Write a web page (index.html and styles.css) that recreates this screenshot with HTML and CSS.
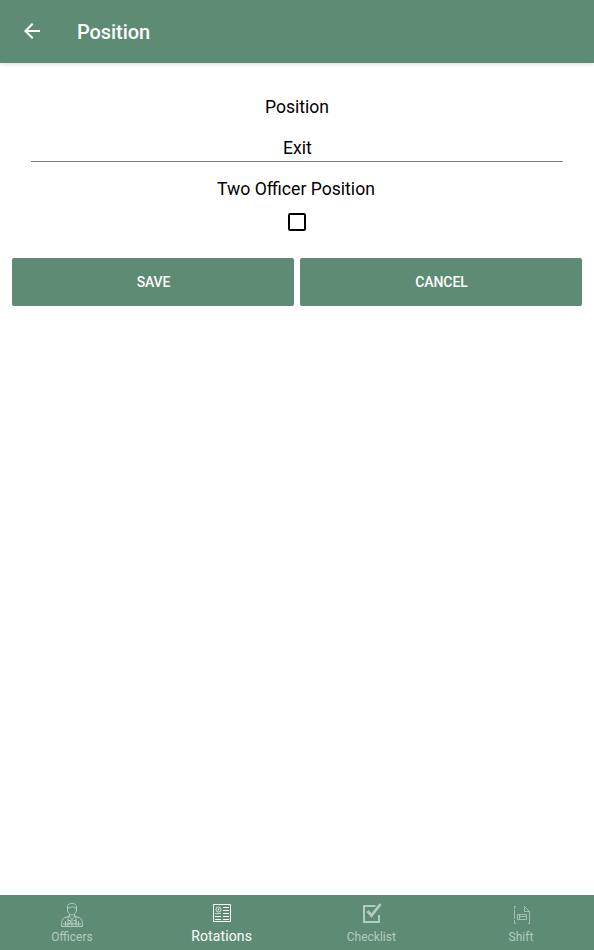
FILE: index.html
```html
<!DOCTYPE html>
<html lang="en">
<head>
<meta charset="utf-8">
<title>Position</title>
<link rel="stylesheet" href="styles.css">
</head>
<body>
<header class="bar">
  <svg class="back" viewBox="0 0 24 24"><path d="M20 11H7.830l5.590-5.590L12 4l-8 8 8 8 1.410-1.410L7.830 13H20z"/></svg>
  <h1>Position</h1>
</header>
<main>
  <div class="label">Position</div>
  <div class="field">Exit</div>
  <div class="label two">Two Officer Position</div>
  <div class="check"></div>
  <div class="actions"><button>SAVE</button><button>CANCEL</button></div>
</main>
<nav>
  <a class="tab"><svg width="24" height="26" viewBox="0 0 24 26">
    <path d="M7.500 8V5Q7.500 1.500 12 1.500Q16.500 1.500 16.500 5V8M8 6Q11 6 12.500 4.500Q14 6 16 6M7.500 8Q8.500 13 12 13Q15.500 13 16.500 8M9.500 12.500V15L12 17.500L14.500 15V12.500M9.500 14L4 16Q1.500 17 1.500 24.500H22.500Q22.500 17 20 16L14.500 14M12 17.500V24M5.500 19V24M18.500 19V24M8 15V24M16 15V24M8 18.500H10.500V21.500H8M13.500 18.500H16V21.500H13.500M3 22H21"/></svg><span>Officers</span></a>
  <a class="tab active"><svg width="20" height="20" viewBox="0 0 20 20">
    <path d="M1.500 1.500H18.500V18.500H1.500ZM11 4.500H17M11 7.500H17M11 10.500H17M3 13.500H9M11 13.500H17M3 16.500H9M11 16.500H17"/><circle cx="6.500" cy="6.500" r="2.500" opacity=".75"/><path opacity=".65" d="M5.500 6.500H7.500M6.500 5.500V7.500M3 10.500H9"/></svg><span>Rotations</span></a>
  <a class="tab check-tab"><svg width="22" height="22" viewBox="0 0 22 22">
    <path class="box" d="M14.500 4H3V20H18V13"/><path class="tick" d="M6.500 9L10.500 13.500L19.500 2"/></svg><span>Checklist</span></a>
  <a class="tab shift"><svg width="18" height="20" viewBox="0 0 18 20">
    <path opacity=".8" d="M3 1.500H1.500V4M1.500 5V14M1.500 15V18.500H3M11.500 1.500L16.500 6.500V18.500H15M11.500 1.500V6.500H16.500M4.500 9.500H13.500V14.500H4.500ZM6 11.500H13.500M6.500 9.500V14.500"/></svg><span>Shift</span></a>
</nav>
</body>
</html>
```
FILE: styles.css
```css
* { box-sizing: border-box; }
body {
  margin: 0;
  height: 950px;
  display: flex;
  flex-direction: column;
  background: #fff;
  color: #000;
  font-family: Roboto, sans-serif;
  overflow: hidden;
}
.bar {
  height: 63px;
  flex: none;
  display: flex;
  align-items: center;
  background: #5d8b73;
  color: #fff;
  box-shadow: 0 1px 4px rgba(0, 0, 0, .15);
}
.back { width: 24px; height: 24px; margin: 0 33px 2px 20px; fill: #fff; }
h1 { margin: 1px 0 0; font-size: 20px; line-height: 24px; font-weight: 500; letter-spacing: -.08px; }
main { flex: 1; padding-top: 32px; }
.label, .field { font-size: 17.6px; line-height: 24px; text-align: center; }
.field {
  margin: 17px 31px 0;
  height: 26px;
  padding-left: 1px;
  border-bottom: 1px solid #7c7c7c;
}
.two { margin-top: 15px; padding-right: 2px; }
.check {
  width: 18px;
  height: 18px;
  margin: 12px auto 0;
  border: 2px solid #000;
  border-radius: 2px;
}
.actions { display: flex; gap: 6px; margin: 27px 12px 0; }
button {
  flex: 1;
  height: 48px;
  padding: 0 0 0 1px;
  border: 0;
  border-radius: 2px;
  background: #5d8b73;
  color: #fff;
  font: 500 14px Roboto, sans-serif;
  letter-spacing: -.1px;
}
nav {
  height: 55px;
  flex: none;
  display: flex;
  justify-content: space-between;
  padding-right: 1px;
  background: #5d8b73;
}
.tab {
  width: 144px;
  display: flex;
  flex-direction: column;
  align-items: center;
  justify-content: flex-end;
  padding-bottom: 5px;
  color: #b4cbbf;
  font-size: 12px;
  line-height: 16px;
}
.tab svg { fill: none; stroke: currentColor; stroke-width: 1; margin-bottom: 1px; }
.tab.active { color: #fff; font-size: 14px; letter-spacing: .12px; padding-bottom: 6px; }
.active svg { margin-bottom: 5px; }
.check-tab .box { stroke-width: 2; }
.check-tab .tick { stroke-width: 2.8; }
.check-tab svg { margin: 0 0 5px 2px; }
.shift svg { margin: 0 0 4px 2px; }
```
